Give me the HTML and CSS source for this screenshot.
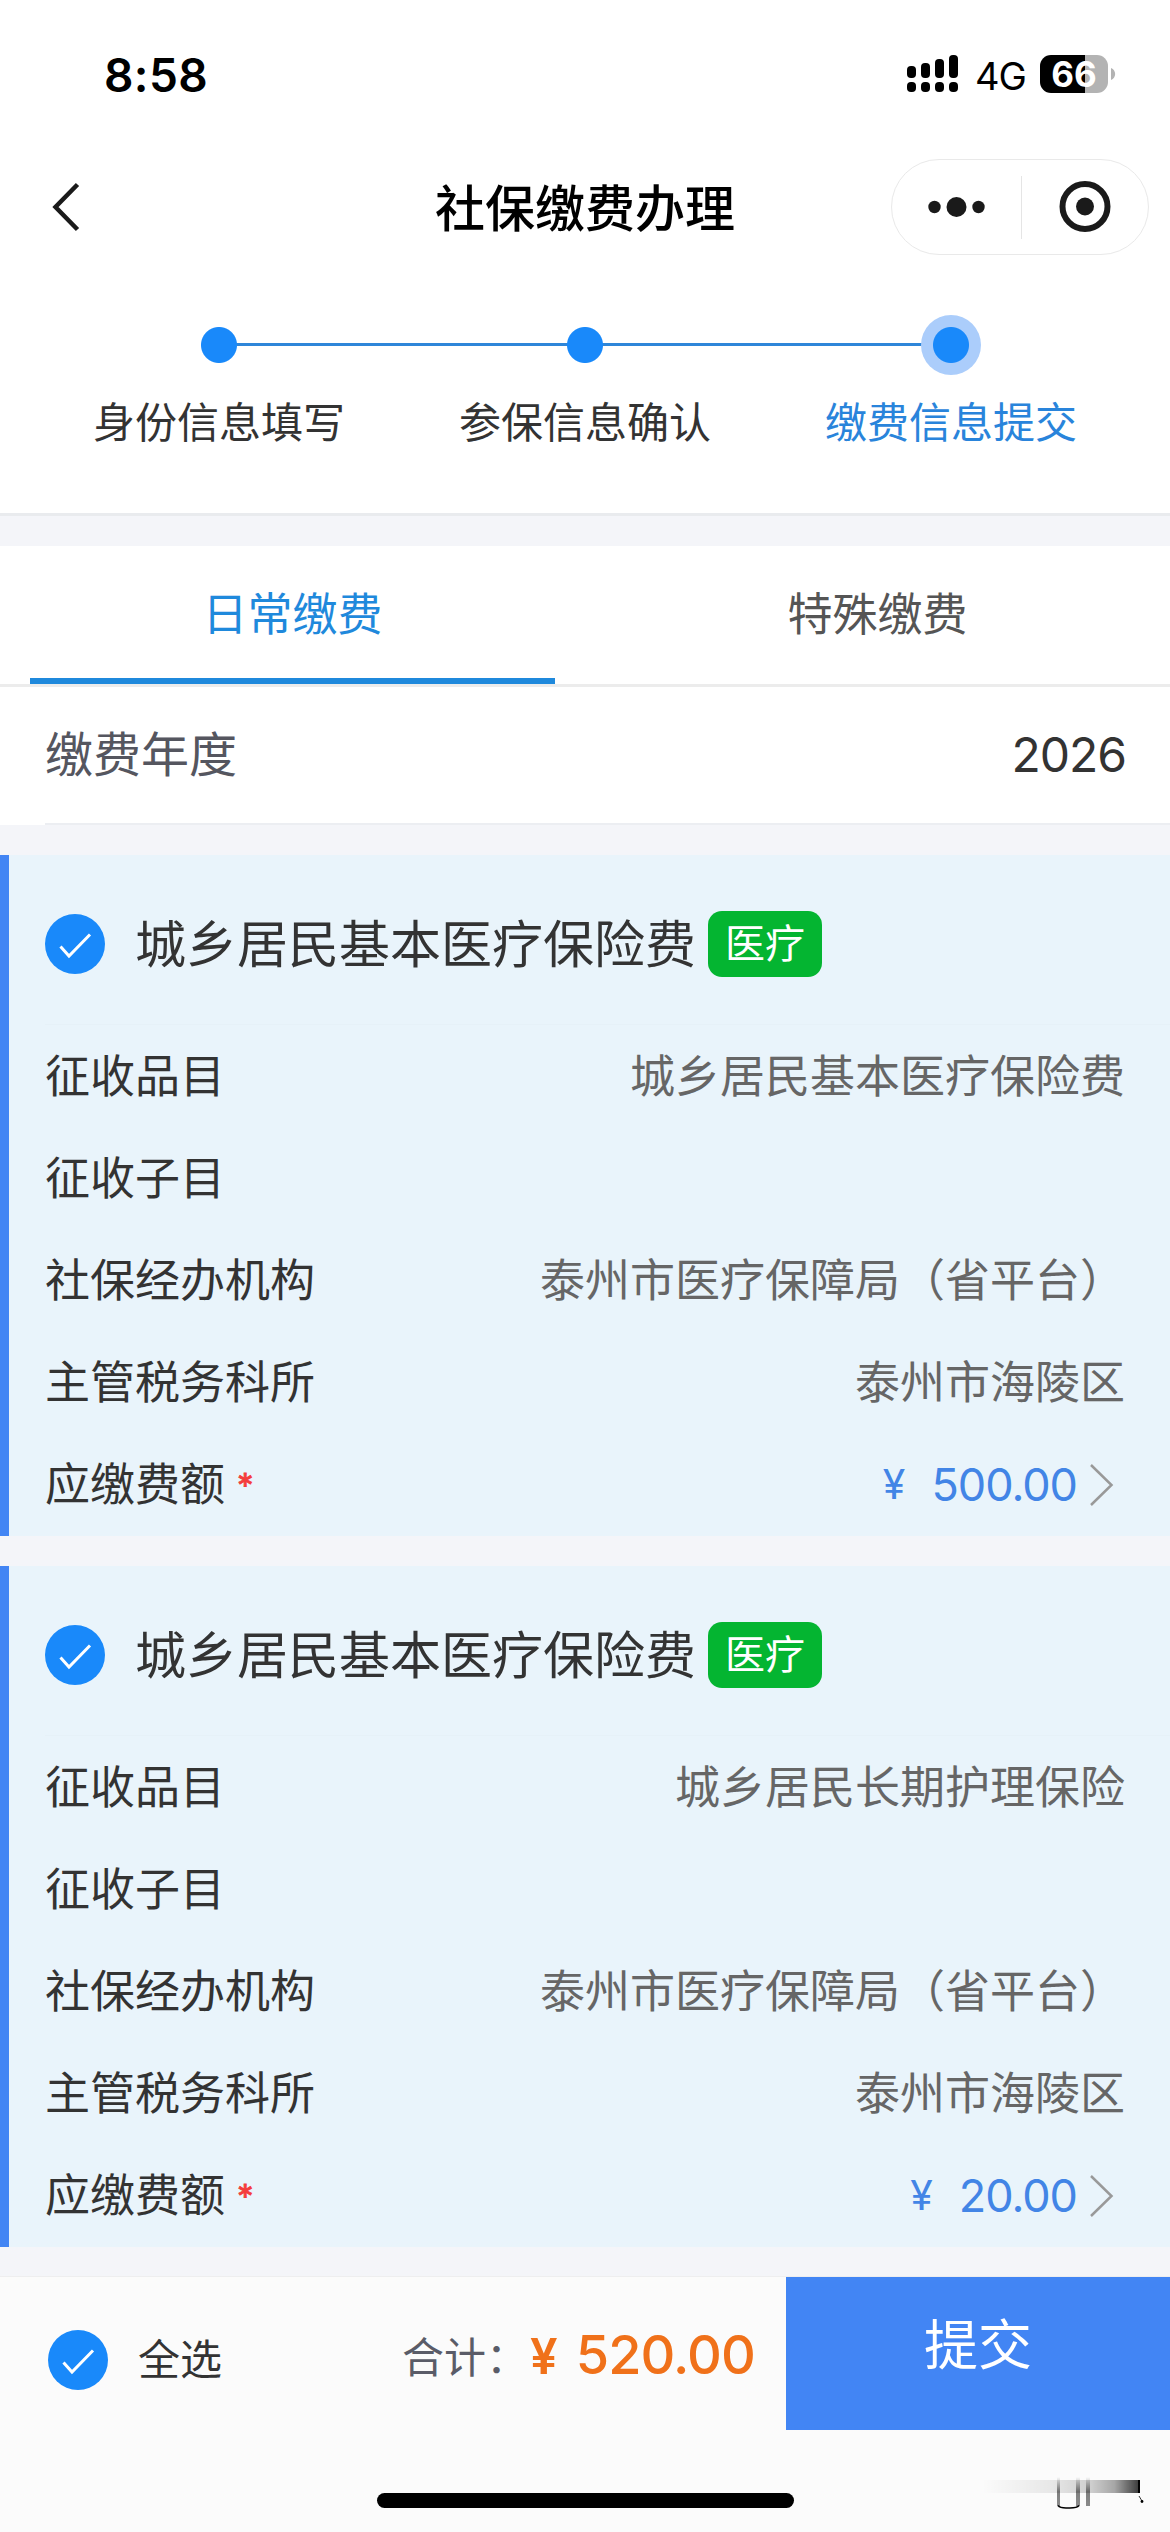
FILE: index.html
```html
<!DOCTYPE html>
<html lang="zh-CN">
<head>
<meta charset="utf-8">
<title>社保缴费办理</title>
<link rel="stylesheet" href="styles.css">
</head>
<body>
<div class="page">
  <header class="status">
    <span class="time">8:58</span>
    <div class="status-icons">
      <svg class="signal" width="52" height="38" viewBox="0 0 52 38"><rect x="0" y="11" width="9" height="12" rx="4"/><rect x="14" y="8" width="9" height="15" rx="4"/><rect x="28" y="4" width="9" height="19" rx="4"/><rect x="42" y="0" width="9" height="23" rx="4"/><rect x="0" y="27" width="9" height="10" rx="4"/><rect x="14" y="27" width="9" height="10" rx="4"/><rect x="28" y="27" width="9" height="10" rx="4"/><rect x="42" y="27" width="9" height="10" rx="4"/></svg>
      <span class="network">4G</span>
      <span class="battery">66</span>
      <svg class="nub" width="5" height="12" viewBox="0 0 5 12"><path d="M0 0C5.5 2 5.5 10 0 12z" fill="#b3b3b3"/></svg>
    </div>
  </header>
  <nav class="navbar">
    <svg class="back" width="36" height="56" viewBox="0 0 36 56"><path d="M29.500 5.500 7.500 28l22 22.500" fill="none" stroke="#1a1a1a" stroke-width="4.500"/></svg>
    <h1 class="nav-title">社保缴费办理</h1>
    <div class="capsule">
      <svg width="129" height="94" viewBox="0 0 129 94" fill="#1a1a1a"><circle cx="42.500" cy="47" r="6.200"/><circle cx="64.500" cy="47" r="10"/><circle cx="86.500" cy="47" r="6.200"/></svg>
      <span class="capsule-divider"></span>
      <svg width="125" height="94" viewBox="0 0 125 94"><circle cx="63" cy="46.500" r="22.500" fill="none" stroke="#1a1a1a" stroke-width="6"/><circle cx="63" cy="46.500" r="9" fill="#1a1a1a"/></svg>
    </div>
  </nav>
  <section class="steps">
    <div class="step"><i class="dot"></i><span>身份信息填写</span></div>
    <div class="step"><i class="dot"></i><span>参保信息确认</span></div>
    <div class="step current"><i class="dot"></i><span>缴费信息提交</span></div>
  </section>
  <div class="tabs">
    <div class="tab active">日常缴费</div>
    <div class="tab">特殊缴费</div>
  </div>
  <div class="year"><span class="year-label">缴费年度</span><span class="year-value">2026</span></div>

  <section class="card">
    <div class="card-head">
      <svg class="check" width="60" height="60" viewBox="0 0 60 60"><circle cx="30" cy="30" r="30" fill="#1989fa"/><path d="M15.500 32.500 24 42 45 20.500" fill="none" stroke="#fff" stroke-width="3"/></svg>
      <h2>城乡居民基本医疗保险费</h2><span class="tag">医疗</span>
    </div>
    <div class="row"><span>征收品目</span><span class="value">城乡居民基本医疗保险费</span></div>
    <div class="row"><span>征收子目</span></div>
    <div class="row"><span>社保经办机构</span><span class="value">泰州市医疗保障局（省平台）</span></div>
    <div class="row"><span>主管税务科所</span><span class="value">泰州市海陵区</span></div>
    <div class="row"><span>应缴费额<em>*</em></span><span class="price"><b>¥</b>500.00<svg width="24" height="44" viewBox="0 0 24 44"><path d="M1 2 21.500 22 1 42" fill="none" stroke="#999" stroke-width="2.500"/></svg></span></div>
  </section>

  <section class="card">
    <div class="card-head">
      <svg class="check" width="60" height="60" viewBox="0 0 60 60"><circle cx="30" cy="30" r="30" fill="#1989fa"/><path d="M15.500 32.500 24 42 45 20.500" fill="none" stroke="#fff" stroke-width="3"/></svg>
      <h2>城乡居民基本医疗保险费</h2><span class="tag">医疗</span>
    </div>
    <div class="row"><span>征收品目</span><span class="value">城乡居民长期护理保险</span></div>
    <div class="row"><span>征收子目</span></div>
    <div class="row"><span>社保经办机构</span><span class="value">泰州市医疗保障局（省平台）</span></div>
    <div class="row"><span>主管税务科所</span><span class="value">泰州市海陵区</span></div>
    <div class="row"><span>应缴费额<em>*</em></span><span class="price"><b>¥</b>20.00<svg width="24" height="44" viewBox="0 0 24 44"><path d="M1 2 21.500 22 1 42" fill="none" stroke="#999" stroke-width="2.500"/></svg></span></div>
  </section>

  <footer class="footer">
    <div class="paybar">
      <svg class="check" width="60" height="60" viewBox="0 0 60 60"><circle cx="30" cy="30" r="30" fill="#1989fa"/><path d="M15.500 32.500 24 42 45 20.500" fill="none" stroke="#fff" stroke-width="3"/></svg>
      <span class="all">全选</span>
      <span class="sum-label">合计：</span>
      <span class="sum"><b>¥</b>520.00</span>
      <div class="submit">提交</div>
    </div>
    <div class="home"></div>
    <svg class="mark" width="170" height="46" viewBox="0 0 170 46">
      <defs>
        <linearGradient id="fade"><stop offset="0" stop-opacity="0"/><stop offset=".45" stop-opacity=".08"/><stop offset=".7" stop-opacity=".18"/><stop offset=".85" stop-opacity=".34"/><stop offset="1" stop-opacity=".75"/></linearGradient>
        <linearGradient id="drop" x2="0" y2="1"><stop offset="0" stop-opacity="0"/><stop offset=".5" stop-opacity=".5"/><stop offset="1" stop-opacity=".45"/></linearGradient>
      </defs>
      <rect x="2" y="9" width="156" height="13" fill="url(#fade)"/>
      <rect x="158" y="9" width="2" height="13"/>
      <rect x="77" y="6" width="3" height="29" fill="url(#drop)"/><rect x="96" y="6" width="4" height="29" fill="url(#drop)"/><rect x="106" y="6" width="4" height="29" fill="url(#drop)"/>
      <path d="M78 34.500q2 2.500 8 2.500h4q7 0 9-2.500" fill="none" stroke="#000" stroke-width="1.500"/>
      <path d="m159 25 3 5" stroke="#000" stroke-width=".8"/><circle cx="162" cy="30.500" r="1.400"/>
    </svg>
  </footer>
</div>
</body>
</html>
```
FILE: styles.css
```css
* { box-sizing: border-box; }
body { margin: 0; background: #f4f5f9; font-family: Inter, "Noto Sans CJK SC", sans-serif; color: #333; }
h1, h2 { margin: 0; font-weight: 400; }
svg { display: block; flex: none; }
.page { width: 1170px; height: 2532px; overflow: hidden; display: flex; flex-direction: column; }
.status { height: 150px; flex: none; background: #fff; display: flex; justify-content: space-between; padding: 55px 54px 0 104px; color: #000; }
.time { height: 40px; line-height: 40px; font-size: 46px; font-weight: 600; letter-spacing: .4px; }
.status-icons { display: flex; height: 38px; align-items: center; }
.network { margin-left: 16px; width: 65px; font-size: 38px; font-weight: 400; line-height: 38px; letter-spacing: -1px; padding-top: 3px; }
.battery { width: 68px; height: 38px; border-radius: 11px; background: linear-gradient(90deg, #000 45px, #b3b3b3 45px); color: #fff; font-size: 35px; line-height: 38px; font-weight: 700; text-align: center; }
.nub { margin-left: 3px; }
.navbar { height: 115px; flex: none; background: #fff; display: grid; grid-template-columns: 391px 452px 258px; align-items: center; padding: 0 21px 0 48px; }
.back { margin-top: -2px; }
.nav-title { font-size: 50px; font-weight: 500; line-height: 72px; color: #000; white-space: nowrap; margin: 3px 0 0 -4px; }
.capsule { height: 96px; width: 258px; border: 1px solid #e9e9e9; border-radius: 48px; display: flex; align-items: center; margin-top: -1px; }
.capsule-divider { width: 1px; height: 63px; background: #e5e5e5; }
.steps { height: 251px; flex: none; background: #fff; border-bottom: 3px solid #e9ebee; display: grid; grid-template-columns: repeat(3, 366px); padding: 50px 36px 0; }
.step { display: flex; flex-direction: column; align-items: center; font-size: 42px; line-height: 60px; }
.dot { width: 60px; height: 60px; border-radius: 50%; background: radial-gradient(circle, #1989fa 17.500px, transparent 18.500px); }
.step span { margin-top: 18px; }
.step:not(.current) { background: linear-gradient(#2e86d9, #2e86d9) 183px 28px / 183px 3px no-repeat; }
.step + .step { background: linear-gradient(#2e86d9, #2e86d9) 0 28px / 366px 3px no-repeat; }
.step.current { background: linear-gradient(#2e86d9, #2e86d9) 0 28px / 155px 3px no-repeat; color: #2984db; }
.current .dot { background: radial-gradient(circle, #1989fa 17.500px, #abcdfb 18.500px); }
.tabs { height: 141px; flex: none; margin-top: 30px; background: #fff; border-bottom: 3px solid #ececec; display: flex; }
.tab { flex: 1; font-size: 45px; line-height: 137px; text-align: center; color: #555; }
.tab.active { color: #1f89dc; background: linear-gradient(#1f89dc, #1f89dc) 30px 100% / 525px 6px no-repeat; }
.year { height: 138px; flex: none; background: #fff linear-gradient(#eceef2, #eceef2) 45px 136px / 1125px 2px no-repeat; display: flex; justify-content: space-between; padding: 0 44px 0 45px; font-size: 48px; line-height: 135px; }
.year-label { color: #55565f; }
.year-value { letter-spacing: -1px; }
.card { height: 681px; flex: none; margin-top: 30px; border-left: 9px solid #4285f4; background: #e9f4fb; }
.card-head { height: 170px; padding: 8px 0 0 36px; display: flex; align-items: center; background: linear-gradient(#e6f1f8, #e6f1f8) 36px 169px / 1125px 1px no-repeat; }
.card-head h2 { font-size: 51px; line-height: 76px; margin: 1px 0 0 30px; }
.tag { width: 114px; height: 66px; margin-left: 12px; border-radius: 14px; background: #04b531; color: #fff; font-size: 40px; line-height: 66px; text-align: center; }
.row { height: 102px; padding: 0 45px 0 36px; display: flex; justify-content: space-between; font-size: 45px; line-height: 103px; }
.value { color: #666; }
.row em { font-size: 33px; font-style: normal; color: #f43c3c; margin-left: 12px; display: inline-block; line-height: 40px; transform: translateY(-4px); -webkit-text-stroke: .8px #f43c3c; }
.price { display: flex; align-items: center; color: #4285e6; padding-right: 11px; letter-spacing: -1px; line-height: 101px; }
.price b { font-weight: 400; font-size: 41px; margin-right: 27px; }
.price svg { margin-left: 13px; margin-top: 2px; }
.footer { position: relative; height: 256px; flex: none; margin-top: 29px; border-top: 1px solid #eeeeef; background: #fbfbfb; }
.paybar { height: 153px; display: flex; align-items: center; }
.paybar .check { margin: 12px 0 0 48px; }
.all, .sum-label { font-size: 42px; line-height: 60px; margin: 13px 0 0 30px; white-space: nowrap; flex: none; }
.sum-label { width: 128px; color: #5a5c68; margin: 9px 0 0 180px; }
.sum { width: 250px; flex: none; font-size: 54px; font-weight: 500; color: #f0711a; white-space: nowrap; letter-spacing: -.9px; margin-top: 1px; }
.sum b { font-weight: 600; font-size: 49px; margin-right: 19px; }
.submit { width: 384px; height: 153px; margin-left: auto; background: #4285f4; color: #fff; font-size: 54px; line-height: 138px; text-align: center; }
.home { width: 417px; height: 15px; border-radius: 8px; background: #000; margin: 63px 0 0 377px; }
.mark { position: absolute; left: 980px; top: 194px; }
```
